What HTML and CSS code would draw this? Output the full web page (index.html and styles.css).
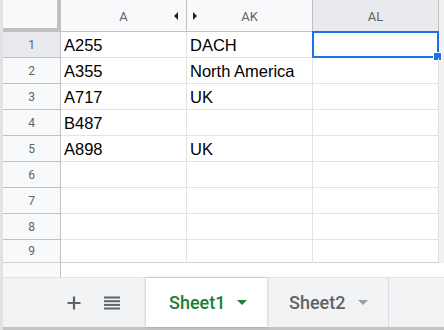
FILE: index.html
```html
<!DOCTYPE html>
<html>
<head>
<meta charset="utf-8">
<link rel="stylesheet" href="styles.css">
</head>
<body>
<div class="app">
  <div class="sheet">
    <div class="grid">
      <div class="corner"></div>
      <div class="colhead">A<span class="hid-left"></span></div>
      <div class="colhead">AK<span class="hid-right"></span></div>
      <div class="colhead selhead">AL</div>

      <div class="rowhead selhead">1</div>
      <div class="cell">A255</div>
      <div class="cell">DACH</div>
      <div class="cell selcell"><span class="selbox"><span class="handle"></span></span></div>

      <div class="rowhead">2</div>
      <div class="cell">A355</div>
      <div class="cell">North America</div>
      <div class="cell"></div>

      <div class="rowhead">3</div>
      <div class="cell">A717</div>
      <div class="cell">UK</div>
      <div class="cell"></div>

      <div class="rowhead">4</div>
      <div class="cell">B487</div>
      <div class="cell"></div>
      <div class="cell"></div>

      <div class="rowhead">5</div>
      <div class="cell">A898</div>
      <div class="cell">UK</div>
      <div class="cell"></div>

      <div class="rowhead">6</div>
      <div class="cell"></div>
      <div class="cell"></div>
      <div class="cell"></div>

      <div class="rowhead">7</div>
      <div class="cell"></div>
      <div class="cell"></div>
      <div class="cell"></div>

      <div class="rowhead">8</div>
      <div class="cell"></div>
      <div class="cell"></div>
      <div class="cell"></div>

      <div class="rowhead last">9</div>
      <div class="cell last"></div>
      <div class="cell last"></div>
      <div class="cell last"></div>
    </div>
    <div class="vscroll"></div>
  </div>
  <div class="hscroll"><div class="hscroll-head"></div></div>
  <div class="tabbar">
    <div class="tools">
      <svg class="ico-plus" width="14" height="14" viewBox="0 0 14 14"><path d="M7 0.5V13.5M0.5 7H13.5" stroke="#5f6368" stroke-width="2.2" fill="none"/></svg>
      <svg class="ico-menu" width="16" height="14" viewBox="0 0 16 14"><rect x="0" y="0.5" width="16" height="2" fill="#5f6368"/><rect x="0" y="4.2" width="16" height="2" fill="#5f6368"/><rect x="0" y="7.9" width="16" height="2" fill="#5f6368"/><rect x="0" y="11.5" width="16" height="2" fill="#5f6368"/></svg>
    </div>
    <div class="tab active"><span class="tabname">Sheet1</span><span class="caret"></span></div>
    <div class="tab"><span class="tabname">Sheet2</span><span class="caret"></span></div>
    <div class="tabrest"></div>
  </div>
  <div class="bottom"></div>
</div>
</body>
</html>
```
FILE: styles.css
```css
* { box-sizing: border-box; }
html, body { margin: 0; padding: 0; background: #fff; }
.app {
  width: 444px;
  height: 330px;
  display: flex;
  flex-direction: column;
  border-left: 3px solid #e2e2e2;
  overflow: hidden;
  font-family: "Liberation Sans", Arial, sans-serif;
}
.sheet { display: flex; height: 263px; flex: none; }
.grid {
  display: grid;
  grid-template-columns: 58px 126px 126px 126px;
  grid-template-rows: 32px repeat(8, 26px) 23px;
}
.corner {
  background: #f8f9fa;
  border-right: 4px solid #c0c0c0;
  border-bottom: 4px solid #c0c0c0;
}
.colhead {
  position: relative;
  background: #f8f9fa;
  border-right: 1px solid #c0c0c0;
  border-bottom: 1px solid #c0c0c0;
  color: #5f6368;
  font-family: Roboto, "Liberation Sans", sans-serif;
  font-size: 13px;
  display: flex;
  align-items: center;
  justify-content: center;
  padding-top: 1px;
}
.selhead { background: #e8eaed; }
.rowhead {
  background: #f8f9fa;
  border-right: 1px solid #c0c0c0;
  border-bottom: 1px solid #c0c0c0;
  color: #5f6368;
  font-family: Roboto, "Liberation Sans", sans-serif;
  font-size: 12px;
  display: flex;
  align-items: center;
  justify-content: center;
}
.rowhead.selhead { background: #e8eaed; }
.cell {
  position: relative;
  border-right: 1px solid #e2e3e3;
  border-bottom: 1px solid #e2e3e3;
  font-size: 16.5px;
  line-height: 24px;
  padding: 1px 0 0 3px;
  color: #000;
  white-space: nowrap;
}
.cell.last, .rowhead.last { border-bottom-color: #d0d0d0; }
.hid-left {
  position: absolute;
  right: 8px;
  top: 12px;
  width: 0; height: 0;
  border-top: 4px solid transparent;
  border-bottom: 4px solid transparent;
  border-right: 4px solid #202124;
}
.hid-right {
  position: absolute;
  left: 6px;
  top: 12px;
  width: 0; height: 0;
  border-top: 4px solid transparent;
  border-bottom: 4px solid transparent;
  border-left: 4px solid #202124;
}
.selbox {
  position: absolute;
  left: -1px;
  top: -1px;
  right: -1px;
  bottom: -1px;
  border: 2px solid #1a73e8;
}
.handle {
  position: absolute;
  right: -5px;
  bottom: -5px;
  width: 9px;
  height: 9px;
  background: #1a73e8;
  border: 1px solid #fff;
}
.vscroll { width: 5px; background: #f1f1f1; }
.hscroll { height: 14px; flex: none; display: flex; }
.hscroll-head { width: 58px; background: #f8f9fa; border-right: 1px solid #c0c0c0; }
.tabbar {
  height: 50px;
  flex: none;
  display: flex;
  background: #f1f3f4;
  border-top: 1px solid #e3e3e3;
}
.tools {
  width: 143px;
  display: flex;
  align-items: center;
  padding-left: 64px;
  gap: 23px;
}
.tools svg { display: block; }
.tab {
  display: flex;
  align-items: center;
  padding: 0 20px 0 22px;
  width: 122px;
  font-family: Roboto, "Liberation Sans", sans-serif;
  font-weight: 500;
  font-size: 18px;
  color: #5f6368;
  border-right: 1px solid #dadce0;
}
.tab.active {
  width: 121px;
  padding-left: 23px;
  background: #fff;
  color: #188038;
  box-shadow: 0 0 3px rgba(60, 64, 67, 0.3);
  border-right: none;
  position: relative;
}
.tabname { flex: none; }
.caret {
  margin-left: auto;
  width: 0; height: 0;
  border-left: 5px solid transparent;
  border-right: 5px solid transparent;
  border-top: 5px solid #9aa0a6;
}
.tab.active .caret { border-top-color: #188038; }
.tabrest { flex: 1; }
.bottom { height: 3px; flex: none; background: #c4c4c4; }
```
